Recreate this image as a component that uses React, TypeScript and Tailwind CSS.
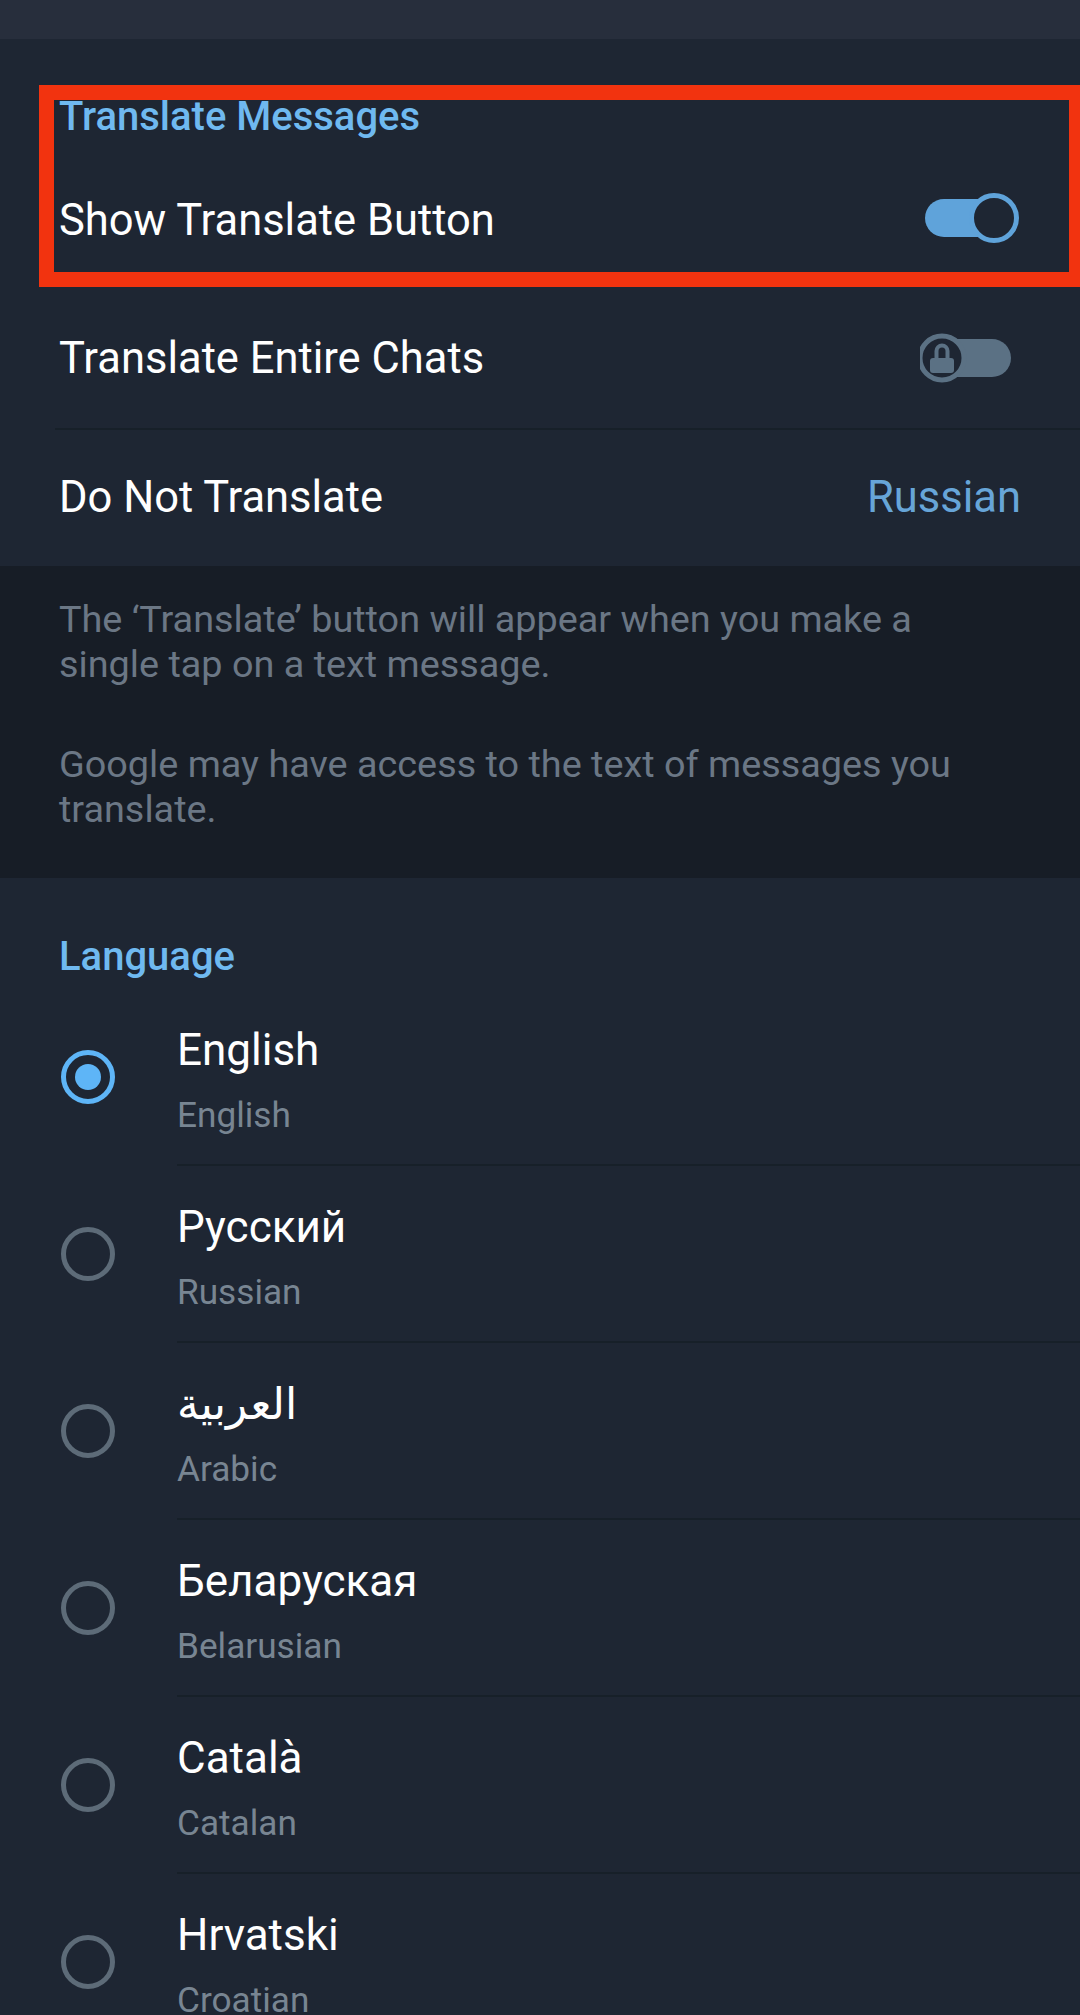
import { Fragment } from "react";

const font = { fontFamily: 'Roboto, "Noto Sans", "DejaVu Sans", sans-serif' };

const languages = [
  { name: "English", sub: "English", selected: true },
  { name: "Русский", sub: "Russian" },
  { name: "العربية", sub: "Arabic" },
  { name: "Беларуская", sub: "Belarusian" },
  { name: "Català", sub: "Catalan" },
  { name: "Hrvatski", sub: "Croatian" },
];

function ToggleOn() {
  return (
    <svg width="104" height="56" viewBox="0 0 104 56" className="-mt-[6px]">
      <rect x="5" y="9" width="82" height="38" rx="19" fill="#5fa3da" />
      <circle cx="74" cy="28" r="22.5" fill="#1e2633" stroke="#5fa3da" strokeWidth="5" />
    </svg>
  );
}

function ToggleLocked() {
  return (
    <svg width="104" height="56" viewBox="0 0 104 56" className="-mt-[2px]">
      <rect x="14" y="9" width="77" height="38" rx="19" fill="#5b7184" />
      <circle cx="22" cy="28" r="22" fill="#1e2633" stroke="#5b7184" strokeWidth="5" />
      <path d="M16.5 30 V21 a5.5 5.5 0 0 1 11 0 V30" fill="none" stroke="#5b7184" strokeWidth="4" />
      <rect x="10" y="28" width="24" height="15" rx="3" fill="#5b7184" />
    </svg>
  );
}

function Radio({ on }: { on?: boolean }) {
  return (
    <div
      className={`grid h-[54px] w-[54px] place-items-center rounded-full border-[5px] ${
        on ? "border-[#5eb5f7]" : "border-[#5d6b78]"
      }`}
    >
      {on && <div className="h-[26px] w-[26px] rounded-full bg-[#5eb5f7]" />}
    </div>
  );
}

export default function App() {
  return (
    <div style={font} className="h-[2015px] w-[1080px] overflow-hidden bg-[#1e2633] text-white">
      <div className="h-[39px] bg-[#272e3c]" />

      {/* translate settings */}
      <section className="relative bg-[#1e2633]">
        <div className="h-[113px] px-[59px] pt-[55px]">
          <h3 className="text-[40px] font-medium leading-[46px] text-[#6fb9f0]">Translate Messages</h3>
        </div>

        <div className="flex h-[138px] items-center justify-between pl-[59px] pr-[56px]">
          <span className="text-[43.5px] leading-[138px]">Show Translate Button</span>
          <ToggleOn />
        </div>

        <div className="flex h-[138px] items-center justify-between pl-[59px] pr-[56px]">
          <span className="text-[43.5px] leading-[138px]">Translate Entire Chats</span>
          <ToggleLocked />
        </div>
        <div className="ml-[55px] h-[2px] bg-[#172029]" />

        <div className="flex h-[136px] items-center justify-between pl-[59px] pr-[59px]">
          <span className="text-[43.5px] leading-[136px]">Do Not Translate</span>
          <span className="text-[43.5px] leading-[136px] text-[#67a5d8]">Russian</span>
        </div>

        <div className="pointer-events-none absolute left-[39px] right-0 top-[46px] h-[202px] border-[15px] border-r-[11px] border-[#f2330f]" />
      </section>

      {/* info */}
      <div className="bg-[#171d26] px-[59px] pb-[46px] pt-[31px] text-[37.8px] leading-[45px] text-[#6b7785]">
        <p>
          The ‘Translate’ button will appear when you make a<br />
          single tap on a text message.
        </p>
        <p className="mt-[55px]">
          Google may have access to the text of messages you<br />
          translate.
        </p>
      </div>

      {/* language list */}
      <section className="bg-[#1e2633]">
        <div className="h-[111px] px-[59px] pt-[56px]">
          <h3 className="text-[40px] font-medium leading-[46px] text-[#6fb9f0]">Language</h3>
        </div>

        {languages.map((l) => (
          <Fragment key={l.sub}>
            <div className="flex h-[175px] items-center">
              <div className="ml-[61px] mr-[62px]">
                <Radio on={l.selected} />
              </div>
              <div className="flex flex-col pt-[6px]">
                <span className="text-[44px] leading-[52px]">{l.name}</span>
                <span className="mt-[18px] text-[35.2px] leading-[42px] text-[#788592]">{l.sub}</span>
              </div>
            </div>
            <div className="ml-[177px] h-[2px] bg-[#172029]" />
          </Fragment>
        ))}
      </section>
    </div>
  );
}
